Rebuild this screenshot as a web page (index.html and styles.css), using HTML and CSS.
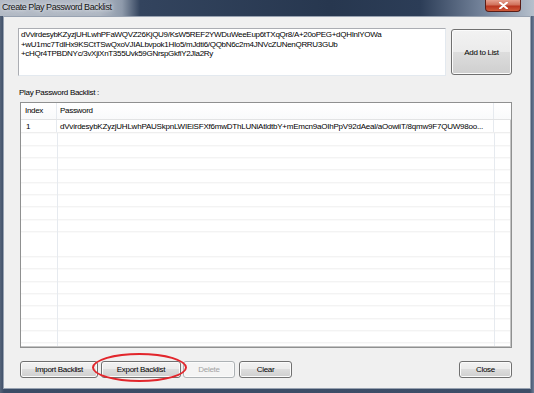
FILE: index.html
```html
<!DOCTYPE html>
<html lang="en">
<head>
  <meta charset="UTF-8">
  <meta name="viewport" content="width=device-width, initial-scale=1.0">
  <title>Create Play Password Backlist</title>
  <link rel="stylesheet" href="styles.css">
</head>
<body>
  <div class="window">
    <div class="titlebar">
      <span class="title">Create Play Password Backlist</span>
      <span class="close-x">
        <svg width="9" height="7" viewBox="0 0 9 7"><path d="M1 0.5 L8 6.5 M8 0.5 L1 6.5" stroke="#fff" stroke-width="2" stroke-linecap="round"/></svg>
      </span>
    </div>

    <div class="client">
      <div class="top-row">
        <div class="input-box">dVvirdesybKZyzjUHLwhPFaWQVZ26KjQU9/KsW5REF2YWDuWeeEup6tTXqQr8/A+20oPEG+dQHInlYOWa<br>+wU1mc7TdlHx9KSCtTSwQxoVJIALbvpok1HIo5/mJdti6/QQbN6c2m4JNVcZUNenQRRU3GUb<br>+cHQr4TPBDNYc/3vXjiXnT355Uvk59GNrspGkfiY2Jla2Ry</div>
        <button class="btn btn-add">Add to List</button>
      </div>

      <div class="label">Play Password Backlist :</div>

      <div class="list">
        <div class="list-head">
          <div class="col-index">Index</div>
          <div class="col-pass">Password</div>
          <div class="col-rest"></div>
        </div>
        <div class="list-body">
          <div class="row">
            <div class="col-index">1</div>
            <div class="col-pass">dVvirdesybKZyzjUHLwhPAUSkpnLWIEiSFXf6mwDThLUNiAtldtbY+mEmcn9aOIhPpV92dAeal/aOowiiT/8qmw9F7QUW98oo...</div>
            <div class="col-rest"></div>
          </div>
        </div>
      </div>

      <div class="btn-row">
        <button class="btn btn-import">Import Backlist</button>
        <button class="btn btn-export">Export Backlist</button>
        <button class="btn btn-delete" disabled>Delete</button>
        <button class="btn btn-clear">Clear</button>
        <span class="spacer"></span>
        <button class="btn btn-close">Close</button>
      </div>
    </div>

    <!-- red marker drawn over the export button -->
    <div class="marker"></div>
  </div>
</body>
</html>
```

FILE: styles.css
```css
/* Window frame */
body {
  margin: 0;
  font-family: "Liberation Sans", Arial, sans-serif;
  font-size: 8px;
  letter-spacing: -0.3px;
  background: #3f506b;
}

.window {
  position: relative;
  width: 534px;
  height: 393px;
  display: flex;
  flex-direction: column;
  background: linear-gradient(to right, #56647a 0, #3b4c66 4px, #3d4e68 530px, #6d7d96 534px);
}

.titlebar {
  height: 16px;
  display: flex;
  align-items: flex-start;
  background: linear-gradient(to right, #b3bac5 0, #aeb6c2 100px, #8e9aab 122px, #33445e 140px, #27374f 330px, #2c3d57 420px, #7d8ca3 490px, #b6c0cc 534px);
}

.title {
  padding: 2px 0 0 2px;
  font-size: 9px;
  letter-spacing: -0.45px;
  color: #141414;
  text-shadow: 0 0 3px #e6e9ee, 0 0 6px #dfe3ea;
}

.close-x {
  margin-left: auto;
  margin-right: 13px;
  width: 34px;
  height: 11px;
  display: flex;
  align-items: center;
  justify-content: center;
  border: 1px solid #5a1d16;
  border-top: none;
  border-radius: 0 0 4px 4px;
  background: linear-gradient(#e6a08f 0%, #d0705a 45%, #b9341f 55%, #cf5a3a 100%);
}

/* Client area */
.client {
  flex: 1;
  margin: 0 3px 4px 3px;
  padding: 11px 18px 0 14px;
  background: #f0f0f0;
  border: 1px solid #98a2b1;
  display: flex;
  flex-direction: column;
}

.top-row {
  display: flex;
  gap: 5px;
}

.input-box {
  width: 428px;
  height: 48px;
  box-sizing: border-box;
  padding: 1px 2px;
  background: #fff;
  border: 1px solid #abadb3;
  border-right-color: #e3e9ef;
  border-bottom-color: #e3e9ef;
  line-height: 9.6px;
  white-space: nowrap;
  overflow: hidden;
  color: #000;
}

.btn {
  font: inherit;
  letter-spacing: inherit;
  color: #000;
  padding: 0;
  border: 1px solid #707070;
  border-radius: 3px;
  background: linear-gradient(#f2f2f2 0%, #ebebeb 50%, #dddddd 50%, #cfcfcf 100%);
  box-shadow: inset 0 0 0 1px #fbfbfb;
}

.btn-add {
  width: 61px;
  height: 46px;
  margin-top: 1px;
}

.label {
  margin-top: 12px;
  padding-left: 1px;
  height: 10px;
  line-height: 10px;
}

/* List view */
.list {
  margin: 4px 0 0 2px;
  width: 492px;
  height: 246px;
  box-sizing: border-box;
  border: 1px solid #8f9090;
  box-shadow: inset -1px -1px 0 #c4c4c4;
  background: #fff;
  display: flex;
  flex-direction: column;
}

.list-head {
  display: flex;
  height: 16px;
  line-height: 16px;
  border-bottom: 1px solid #e2e3e4;
  background: linear-gradient(#ffffff, #f9fafb);
}

.list-head .col-index {
  padding-left: 4px;
}

.col-index {
  width: 36px;
  box-sizing: border-box;
  border-right: 1px solid #e6eaef;
  padding-left: 5px;
}

.col-pass {
  width: 437px;
  box-sizing: border-box;
  border-right: 1px solid #e6eaef;
  padding-left: 3px;
  white-space: nowrap;
  overflow: hidden;
}

.row .col-pass {
  letter-spacing: -0.22px;
}

.col-rest {
  flex: 1;
}

.list-body {
  flex: 1;
  margin-right: 1px;
  margin-bottom: 1px;
  background:
    linear-gradient(to right, transparent 36px, #e6eaef 36px, #e6eaef 37px, transparent 37px, transparent 473px, #e6eaef 473px, #e6eaef 474px, transparent 474px),
    repeating-linear-gradient(to bottom, transparent 0, transparent 11.35px, #eeeeee 11.35px, #eeeeee 12.35px);
  background-position: 0 0, 0 1.3px;
}

.row {
  display: flex;
  height: 13px;
  line-height: 13px;
  background: #fff;
  border-bottom: 1px solid #eeeeee;
  box-sizing: border-box;
}

/* Buttons along the bottom */
.btn-row {
  display: flex;
  margin-top: 13px;
  padding-left: 2px;
  height: 17px;
}

.btn-row .btn {
  height: 17px;
}

.btn-import { width: 78px; }
.btn-export { width: 80px; margin-left: 3px; }
.btn-delete { width: 52px; margin-left: 2px; }
.btn-clear { width: 53px; margin-left: 4px; }
.btn-close { width: 53px; }

.btn-delete {
  color: #a3a3a3;
  border-color: #adb2b5;
  background: #f4f4f4;
}

.spacer {
  flex: 1;
}

.marker {
  position: absolute;
  left: 92px;
  top: 353px;
  width: 91px;
  height: 25px;
  border: 2px solid #e2262c;
  border-radius: 50%;
}
```
